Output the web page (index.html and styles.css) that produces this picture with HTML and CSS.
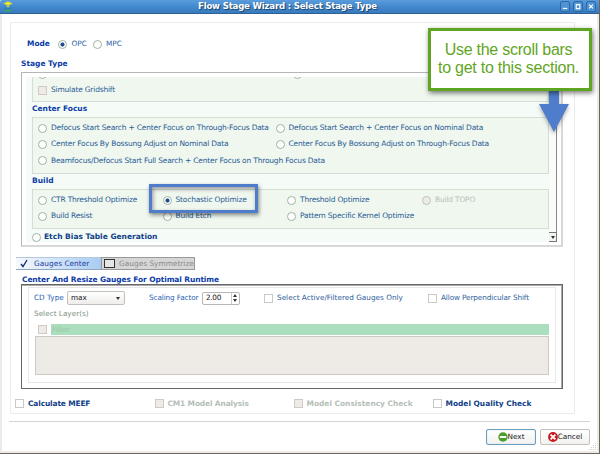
FILE: index.html
```
<!DOCTYPE html>
<html lang="en">
<head>
<meta charset="utf-8">
<title>Flow Stage Wizard : Select Stage Type</title>
<link rel="stylesheet" href="styles.css">
</head>
<body>
<div class="window">
  <header class="titlebar">
    <svg class="app-icon" viewBox="0 0 10 11"><path d="M0.3 2.5 5 0.2 9.7 2.5 5 5z" fill="#d9d92b"/><path d="M2.5 2.5 5 1.3 7.5 2.5 5 3.8z" fill="#f3ec3a"/><path d="M3 5h4L5 6.6z" fill="#c9c94a"/><path d="M1 6.2l3 1.2 5-1.2v1.3L4 8.6 1 7.6z" fill="#2c80a8"/><path d="M1.2 8.6 5 9.2 9 8v1.6L5 10.8 1.2 10z" fill="#39a763"/></svg>
    <h1>Flow Stage Wizard : Select Stage Type</h1>
    <div class="win-buttons">
      <svg viewBox="0 0 9 10"><path d="M2 7.2h5" /></svg>
      <svg viewBox="0 0 9 10"><path d="M2.5 3v4.4h4V3zM2 2.9h5" /></svg>
      <svg viewBox="0 0 9 10"><path d="M2.3 2.8l4.4 4.4M6.7 2.8L2.3 7.2" /></svg>
    </div>
  </header>

  <main class="frame">
    <div class="mode"><b>Mode</b><i class="radio on"></i><span>OPC</span><i class="radio"></i><span>MPC</span></div>
    <h2 class="stage-title">Stage Type</h2>
    <section class="scroll-box">
      <div class="scroll-content">
        <div class="group g-grid">
          <div class="cut"><i class="radio"></i><i class="radio"></i></div>
          <div class="opt"><i class="check off"></i><span>Simulate Gridshift</span></div>
        </div>
        <h3>Center Focus</h3>
        <div class="group g-focus">
          <div class="opt"><i class="radio"></i><span>Defocus Start Search + Center Focus on Through-Focus Data</span></div>
          <div class="opt"><i class="radio"></i><span>Defocus Start Search + Center Focus on Nominal Data</span></div>
          <div class="opt"><i class="radio"></i><span>Center Focus By Bossung Adjust on Nominal Data</span></div>
          <div class="opt"><i class="radio"></i><span>Center Focus By Bossung Adjust on Through-Focus Data</span></div>
          <div class="opt wide"><i class="radio"></i><span>Beamfocus/Defocus Start Full Search + Center Focus on Through Focus Data</span></div>
        </div>
        <h3>Build</h3>
        <div class="group g-build">
          <div class="opt"><i class="radio"></i><span>CTR Threshold Optimize</span></div>
          <div class="opt"><i class="radio on"></i><span>Stochastic Optimize</span></div>
          <div class="opt"><i class="radio"></i><span>Threshold Optimize</span></div>
          <div class="opt disabled"><i class="radio off"></i><span>Build TOPO</span></div>
          <div class="opt"><i class="radio"></i><span>Build Resist</span></div>
          <div class="opt"><i class="radio"></i><span>Build Etch</span></div>
          <div class="opt"><i class="radio"></i><span>Pattern Specific Kernel Optimize</span></div>
        </div>
        <div class="opt etch"><i class="radio"></i><b>Etch Bias Table Generation</b></div>
      </div>
      <div class="scrollbar"><div class="track"></div><div class="down"></div></div>
    </section>

    <nav class="tabs">
      <div class="tab active"><svg viewBox="0 0 8 9"><path d="M1 5l2 2.5L7 1" /></svg><span>Gauges Center</span></div>
      <div class="tab"><i class="tab-box"></i><span>Gauges Symmetrize</span></div>
    </nav>

    <h2 class="center-title">Center And Resize Gauges For Optimal Runtime</h2>
    <section class="gauges">
      <div class="gauges-inner">
        <div class="controls">
          <label>CD Type</label>
          <div class="select"><span>max</span><i class="arrow"></i></div>
          <label class="scale">Scaling Factor</label>
          <div class="spin"><span>2.00</span><div class="steps"><i class="up"></i><i class="arrow"></i></div></div>
          <div class="opt active-only"><i class="check"></i><span>Select Active/Filtered Gauges Only</span></div>
          <div class="opt perp"><i class="check"></i><span>Allow Perpendicular Shift</span></div>
        </div>
        <div class="layers-label">Select Layer(s)</div>
        <div class="filter"><i class="check off"></i><div class="filter-field">Filter</div></div>
        <div class="layers"></div>
      </div>
    </section>

    <div class="checks">
      <div class="opt"><i class="check"></i><b class="meef">Calculate MEEF</b></div>
      <div class="opt disabled"><i class="check off"></i><b class="cm1">CM1 Model Analysis</b></div>
      <div class="opt disabled"><i class="check off"></i><b>Model Consistency Check</b></div>
      <div class="opt"><i class="check"></i><b>Model Quality Check</b></div>
    </div>
  </main>

  <footer class="actions">
    <button class="primary"><svg viewBox="0 0 10 10"><circle cx="5" cy="5" r="4.7" fill="#4a9f2b"/><path d="M1.8 5h6.4" stroke="#fff" stroke-width="2"/></svg>Next</button>
    <button><svg viewBox="0 0 10 10"><circle cx="5" cy="5" r="4.9" fill="#c9161c"/><path d="M2.6 2.6l4.8 4.8M7.4 2.6L2.6 7.4" stroke="#fff" stroke-width="1.9"/></svg>Cancel</button>
  </footer>
  <svg class="grip" viewBox="0 0 8 8"><path d="M6 0h1M4 2h1M6 2h1M2 4h1M4 4h1M6 4h1M0 6h1M2 6h1M4 6h1M6 6h1" transform="translate(0 .5)"/></svg>

  <div class="highlight"></div>
  <svg class="pointer" viewBox="0 0 30 43"><path d="M10 0h10v14h10L15 42 0 14h10z"/></svg>
  <div class="callout"><span>Use the scroll bars</span><span>to get to this section.</span></div>
</div>
</body>
</html>
```
FILE: styles.css
```
* { box-sizing: border-box; }
body { margin: 0; font: 7.3px/10px "DejaVu Sans", sans-serif; color: #2a5c95; }
h1, h2, h3 { margin: 0; }
i { font-style: normal; flex: none; display: block; }
svg { display: block; overflow: visible; }
span, b, h2, h3, label { white-space: nowrap; }
b { font-size: 7.45px; }

.window { position: relative; width: 600px; height: 454px; overflow: hidden; background: #fff; border: solid; border-width: 0 1px 1px 0; border-color: #6b655e; box-shadow: inset 2px 0 #eeebe7, inset -2px -2px #eeebe7; }
.titlebar { height: 14px; display: flex; align-items: center; padding: 0 3px 0 3px; background: linear-gradient(#5a9ddd, #4389cf 50%, #387bbd); border-bottom: 1px solid #2c5f94; border-radius: 2px 0 0 0; }
.app-icon { width: 10px; height: 11px; }
h1 { margin-left: 185px; width: 363px; font-size: 8.6px; letter-spacing: -0.2px; line-height: 13px; color: #fff; text-shadow: 1px 1px 1px #1c3e63; white-space: nowrap; }
.win-buttons { display: flex; gap: 3px; }
.win-buttons svg { width: 10px; height: 11px; border: 1px solid #2d68a5; border-radius: 2px; background: #4e93d4; }
.win-buttons path { stroke: #fff; stroke-width: 1.3; fill: none; }

.frame { margin: 8px 24px 0 10px; width: 565px; height: 392px; border: 1px solid #ebebeb; border-radius: 1px; }
.mode { display: flex; align-items: center; height: 12px; margin: 15px 0 0 16px; color: #2a5fa8; }
.mode b, h2, h3 { color: #0a3ba6; font-weight: bold; }
.mode b { width: 31px; }
.mode .radio + span { width: 21px; margin: 0 0 0 4.5px; }
h2, h3 { font-size: 7.5px; line-height: 10px; }
.stage-title { margin: 9px 0 0 10px; }

.radio { width: 9px; height: 9px; border: 1px solid #9fb3a3; border-radius: 50%; background: #fff; }
.radio.on { background: radial-gradient(circle, #1f4d8c 0 1.7px, #fff 2.4px); }
.radio.off { background: #eeebe7; border-color: #b9c4bb; }
.check { width: 9px; height: 9px; border: 1px solid #c9c9c5; background: #fff; }
.check.off { background: #eeebe7; border-color: #cfcac6; }
.opt { display: flex; align-items: center; gap: 4px; min-width: 0; }
.disabled { color: #b5c2b8; }

.scroll-box { margin: 3px 0 0 10px; width: 542px; height: 175px; border: 1px solid #b5b5b5; border-right: 2px solid #d8d8d8; border-bottom: 2px solid #d8d8d8; padding: 4px 4px 3px 4px; display: flex; justify-content: space-between; }
.scroll-content { width: 524px; height: 165px; background: #f5fbf7; padding-left: 6px; font-size: 7.5px; }
.scroll-content span { letter-spacing: -0.197px; }
.scroll-content b { font-size: 7.5px; }
.group { width: 517px; background: #eff7ef; border: 1px solid #d3ded4; padding-left: 5px; }
.g-grid { height: 25px; border-top: 0; }
.cut { display: flex; gap: 246px; height: 2px; overflow: hidden; align-items: flex-end; }
.g-grid .opt { height: 22px; }
h3 { height: 15px; line-height: 14px; }
.g-focus { height: 57px; display: grid; grid-template: repeat(3, 16.3px) / 237.5px 1fr; padding-top: 2px; }
.wide { grid-column: span 2; }
.g-build { height: 40px; display: grid; grid-template: repeat(2, 16.3px) / 124.5px 124.5px 135px 1fr; padding-top: 2px; }
.etch { height: 16px; color: #0f4186; gap: 3px; }
.scrollbar { width: 8px; display: flex; flex-direction: column; background: #fafcfa; }
.track { flex: 1; border-right: 1px solid #888; }
.down { height: 10px; border: 1px solid #777; border-left: 0; background: #f4f4f2; padding: 3px 2px; }
.down::after, .arrow { content: ""; display: block; width: 0; border: 2.5px solid transparent; border-top: 3px solid #333; border-bottom: 0; }

.tabs { display: flex; margin: 10px 0 0 5px; height: 13px; font-size: 7.4px; }
.tab { display: flex; align-items: center; width: 94px; border: 1px solid #999; background: #d6d6d6; color: #8b8b8b; padding-left: 2px; gap: 4px; }
.tab.active { width: 85px; border: 0; border-top: 1px solid #b4c7dc; border-bottom: 1px solid #8fa5bf; background: linear-gradient(90deg, #f5f9fd, #a9ccf2); color: #1c3d9d; padding-left: 4px; gap: 6px; }
.tab svg { width: 8px; height: 9px; }
.tab path { fill: none; stroke: #14276b; stroke-width: 1.3; }
.tab-box { width: 11px; height: 9px; border: 1px solid #333; background: #e6e6e6; }
.center-title { margin: 6px 0 0 11px; height: 8px; line-height: 8px; letter-spacing: -0.11px; }
.gauges { margin-left: 10px; width: 542px; height: 105px; border: 1px solid #666; box-shadow: inset -1px 1px #aaa; padding: 2px 6px; }
.gauges-inner { height: 96px; border: 1px solid #e8e8e8; padding: 3px 5px 0; }
.controls { display: flex; align-items: center; height: 14px; color: #2a5fb5; }
.controls label { width: 33px; }
.controls .scale { margin-left: 24px; width: 53px; letter-spacing: -0.12px; }
.controls .opt { color: #2f629c; }
.perp { letter-spacing: -0.12px; }
.select { width: 58px; height: 14px; border: 1px solid #c3bfba; border-radius: 2px; background: linear-gradient(#fff, #efedeb); color: #222; display: flex; align-items: center; justify-content: space-between; padding: 0 4px 0 3px; }
.spin { width: 38px; height: 13px; border: 1px solid #bbb6b1; border-radius: 2px; display: flex; align-items: center; justify-content: space-between; color: #222; padding-left: 3px; }
.spin span { letter-spacing: -0.3px; }
.steps { height: 100%; border-left: 1px solid #ccc; display: flex; flex-direction: column; justify-content: center; gap: 2px; padding: 0 2px 0 1px; }
.up { width: 0; border: 2.5px solid transparent; border-bottom: 3px solid #333; border-top: 0; }
.active-only { margin-left: 24px; width: 164px; }
.layers-label { margin-top: 2px; height: 16px; line-height: 13px; color: #819083; }
.filter { display: flex; align-items: center; height: 12px; gap: 4px; padding-left: 4px; }
.filter-field { width: 498px; height: 11px; background: #abdebc; color: #9cc8aa; padding-left: 1px; line-height: 11px; }
.layers { margin: 1px 0 0 1px; width: 514px; height: 39px; background: #eeebe7; border: 1px solid #cdc9c5; }
.checks { margin: 8px 0 0 4px; height: 13px; display: grid; grid-template-columns: 139.5px 139px 139px 1fr; color: #0f4186; }
.checks .disabled { color: #b5c0b8; }
.meef, .cm1 { letter-spacing: -0.13px; }

.actions { margin: 7px 9px 0; border-top: 1px solid #d4d4d4; padding-top: 7px; display: flex; justify-content: flex-end; gap: 4px; }
button { width: 50px; height: 16px; padding: 0; border: 1px solid #c5c0bc; border-radius: 2px; background: linear-gradient(#fff, #f2f1f0); font: inherit; color: #222; display: flex; align-items: center; justify-content: center; gap: 0; }
button svg { width: 10px; height: 10px; }
button.primary { border-color: #6b9fc0; box-shadow: inset 0 0 1px #8fbad5; }
.grip { position: absolute; left: 589px; top: 443px; width: 8px; height: 8px; }
.grip path { stroke: #ccc; }

.highlight { position: absolute; left: 149px; top: 184px; width: 109px; height: 29px; border: 3px solid #4f7ccb; box-shadow: 1px 2px 4px #0007, inset 1px 2px 4px #0006; }
.pointer { position: absolute; left: 539px; top: 90px; width: 30px; height: 43px; filter: drop-shadow(0 2px 2px #0005); fill: #4f7ccb; }
.callout { position: absolute; left: 428px; top: 28px; width: 164px; height: 63px; border: 3px solid #5fa524; background: #fff; box-shadow: 1px 2px 5px #0008; display: flex; flex-direction: column; align-items: center; justify-content: center; padding: 0 3px 2px 0; font: 16px/18px "Liberation Sans", sans-serif; letter-spacing: -0.25px; color: #5fa524; }
```
